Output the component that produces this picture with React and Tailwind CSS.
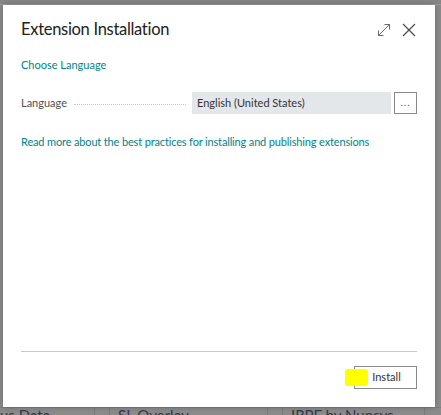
import React from "react";

function ExpandIcon() {
  return (
    <svg width="14" height="14" viewBox="0 0 14 14" fill="none" stroke="#6b6b6b" strokeWidth="1">
      <path d="M1.5 12.5 L12.5 1.5" />
      <path d="M7.5 1.5 H12.5 V6.5" />
      <path d="M1.5 7.5 V12.5 H6.5" />
    </svg>
  );
}

function CloseIcon() {
  return (
    <svg width="14" height="14" viewBox="0 0 14 14" fill="none" stroke="#505050" strokeWidth="1.3">
      <path d="M1 1 L13 13" />
      <path d="M13 1 L1 13" />
    </svg>
  );
}

export default function App() {
  const font = { fontFamily: '"Segoe UI", Lato, "Liberation Sans", sans-serif' };
  return (
    <div className="relative w-[441px] h-[415px] overflow-hidden bg-[#8b8b8b]" style={font}>
      {/* dimmed page behind */}
      <div className="flex flex-col h-full">
        <div className="h-[5px] bg-[#868686] border-b border-[#9a9a9a]"></div>
        <div className="flex-1"></div>
        <div className="h-[8px] flex text-[15px] leading-[10px] text-[#2f3a4a] border-t border-[#7d7d7d]">
          <div className="w-[95px] pt-[2px] border-r border-[#7a7a7a] whitespace-nowrap">us Data</div>
          <div className="w-[15px] border-r border-[#7a7a7a]"></div>
          <div className="w-[158px] pl-[8px] pt-[2px] border-r border-[#7a7a7a] whitespace-nowrap">SL Overlay</div>
          <div className="w-[15px] border-r border-[#7a7a7a]"></div>
          <div className="w-[142px] pl-[8px] pt-[2px] border-r border-[#7a7a7a] whitespace-nowrap">IRPF by Nunsys</div>
        </div>
      </div>

      {/* dialog */}
      <div className="absolute left-[3px] top-[5px] w-[432px] h-[402px] bg-white shadow-[0_0_6px_rgba(0,0,0,0.25)] flex flex-col px-[18px]">
        <div className="flex items-center justify-between h-[48px] pt-[1px]">
          <div className="text-[16.5px] tracking-[-0.3px] text-[#212121]">Extension Installation</div>
          <div className="flex items-center gap-[11px] mr-[1px]">
            <ExpandIcon />
            <CloseIcon />
          </div>
        </div>
        <div className="text-[11px] text-[#00838a] mt-[4px] leading-[16px]">Choose Language</div>
        <div className="flex items-center mt-[19px] h-[22px]">
          <div className="text-[11px] text-[#505050] w-[53px] shrink-0">Language</div>
          <div className="flex-1 border-b border-dotted border-[#c8c8c8] h-[1px] mr-[6px] mt-[2px]"></div>
          <div className="w-[199px] h-[22px] bg-[#e4e7ea] text-[11px] text-[#333] pl-[5px] flex items-center">English (United States)</div>
          <div className="w-[23px] h-[22px] ml-[3px] border border-[#8a8a8a] flex items-center justify-center text-[10px] text-[#555] leading-none pb-[3px] tracking-[1px]">...</div>
        </div>
        <div className="text-[11px] tracking-[-0.15px] text-[#00838a] mt-[20px] leading-[16px] whitespace-nowrap">Read more about the best practices for installing and publishing extensions</div>
        <div className="flex-1"></div>
        <div className="border-t border-[#c8c8c8]"></div>
        <div className="flex justify-end mt-[14px] mb-[18px]">
          <div className="relative w-[63px] h-[23px] border border-[#8a8a8a] text-[11px] text-[#333] flex items-center justify-center">
            <span className="pl-[2px]">Install</span>
            <div className="absolute left-[-10px] top-[2px] w-[23px] h-[17px] bg-[#ffff00] rounded-[2px]"></div>
          </div>
        </div>
      </div>
    </div>
  );
}
